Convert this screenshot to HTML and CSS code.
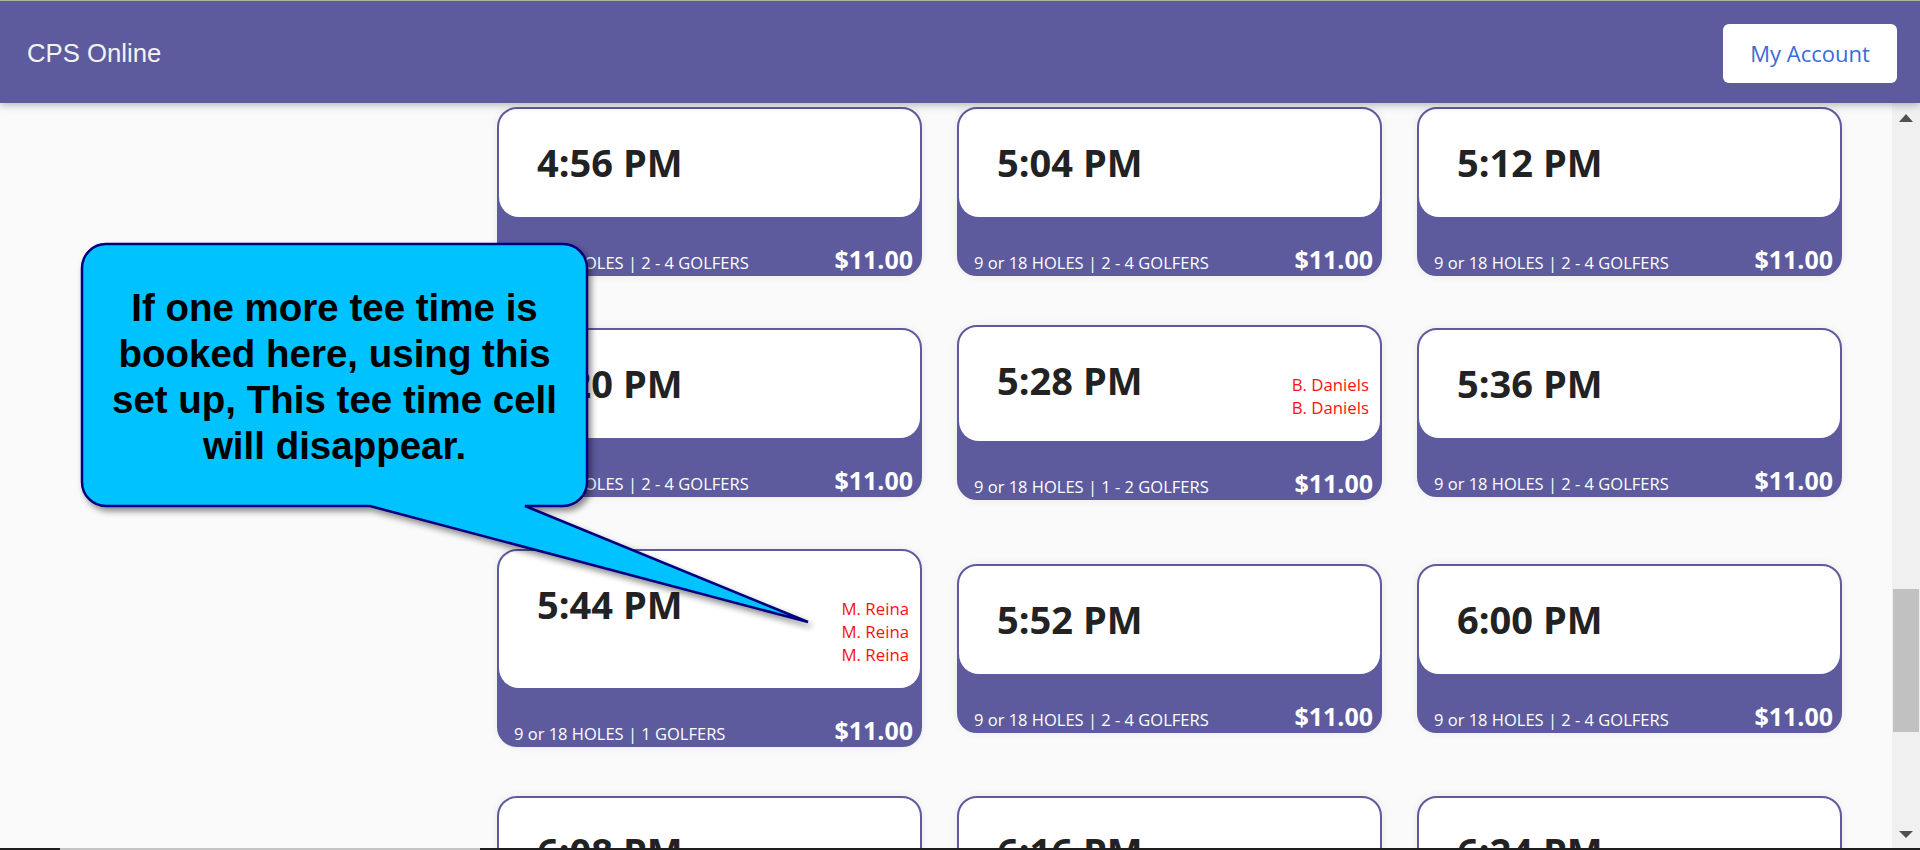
FILE: index.html
```html
<!DOCTYPE html>
<html lang="en">
<head>
<meta charset="utf-8">
<title>CPS Online</title>
<link rel="stylesheet" href="styles.css">
</head>
<body>
<div class="app">
  <header class="topbar">
    <div class="brand">CPS Online</div>
    <button class="account-btn">My Account</button>
  </header>
  <div class="viewport">
    <main class="content">
      <div class="tee-grid">
        <div class="tee-card">
          <div class="tee-top"><div class="tee-time">4:56 PM</div></div>
          <div class="tee-foot"><div class="tee-foot-row"><span class="tee-info">9 or 18 HOLES | 2 - 4 GOLFERS</span><span class="tee-price">$11.00</span></div></div>
        </div>
        <div class="tee-card">
          <div class="tee-top"><div class="tee-time">5:04 PM</div></div>
          <div class="tee-foot"><div class="tee-foot-row"><span class="tee-info">9 or 18 HOLES | 2 - 4 GOLFERS</span><span class="tee-price">$11.00</span></div></div>
        </div>
        <div class="tee-card">
          <div class="tee-top"><div class="tee-time">5:12 PM</div></div>
          <div class="tee-foot"><div class="tee-foot-row"><span class="tee-info">9 or 18 HOLES | 2 - 4 GOLFERS</span><span class="tee-price">$11.00</span></div></div>
        </div>

        <div class="tee-card">
          <div class="tee-top"><div class="tee-time">5:20 PM</div></div>
          <div class="tee-foot"><div class="tee-foot-row"><span class="tee-info">9 or 18 HOLES | 2 - 4 GOLFERS</span><span class="tee-price">$11.00</span></div></div>
        </div>
        <div class="tee-card">
          <div class="tee-top"><div class="tee-time">5:28 PM</div><div class="tee-names"><div>B. Daniels</div><div>B. Daniels</div></div></div>
          <div class="tee-foot"><div class="tee-foot-row"><span class="tee-info">9 or 18 HOLES | 1 - 2 GOLFERS</span><span class="tee-price">$11.00</span></div></div>
        </div>
        <div class="tee-card">
          <div class="tee-top"><div class="tee-time">5:36 PM</div></div>
          <div class="tee-foot"><div class="tee-foot-row"><span class="tee-info">9 or 18 HOLES | 2 - 4 GOLFERS</span><span class="tee-price">$11.00</span></div></div>
        </div>

        <div class="tee-card">
          <div class="tee-top"><div class="tee-time">5:44 PM</div><div class="tee-names"><div>M. Reina</div><div>M. Reina</div><div>M. Reina</div></div></div>
          <div class="tee-foot"><div class="tee-foot-row"><span class="tee-info">9 or 18 HOLES | 1 GOLFERS</span><span class="tee-price">$11.00</span></div></div>
        </div>
        <div class="tee-card">
          <div class="tee-top"><div class="tee-time">5:52 PM</div></div>
          <div class="tee-foot"><div class="tee-foot-row"><span class="tee-info">9 or 18 HOLES | 2 - 4 GOLFERS</span><span class="tee-price">$11.00</span></div></div>
        </div>
        <div class="tee-card">
          <div class="tee-top"><div class="tee-time">6:00 PM</div></div>
          <div class="tee-foot"><div class="tee-foot-row"><span class="tee-info">9 or 18 HOLES | 2 - 4 GOLFERS</span><span class="tee-price">$11.00</span></div></div>
        </div>

        <div class="tee-card">
          <div class="tee-top"><div class="tee-time">6:08 PM</div></div>
          <div class="tee-foot"><div class="tee-foot-row"><span class="tee-info">9 or 18 HOLES | 2 - 4 GOLFERS</span><span class="tee-price">$11.00</span></div></div>
        </div>
        <div class="tee-card">
          <div class="tee-top"><div class="tee-time">6:16 PM</div></div>
          <div class="tee-foot"><div class="tee-foot-row"><span class="tee-info">9 or 18 HOLES | 2 - 4 GOLFERS</span><span class="tee-price">$11.00</span></div></div>
        </div>
        <div class="tee-card">
          <div class="tee-top"><div class="tee-time">6:24 PM</div></div>
          <div class="tee-foot"><div class="tee-foot-row"><span class="tee-info">9 or 18 HOLES | 2 - 4 GOLFERS</span><span class="tee-price">$11.00</span></div></div>
        </div>
      </div>

      <div class="callout">
        <svg class="callout-shape" width="740" height="390" viewBox="0 0 740 390">
          <path d="M 25 1 H 482 A 24 24 0 0 1 506 25 V 239 A 24 24 0 0 1 482 263 H 444 L 727 379 L 289 263 H 25 A 24 24 0 0 1 1 239 V 25 A 24 24 0 0 1 25 1 Z" fill="#00c2ff" stroke="#000080" stroke-width="2.5" stroke-linejoin="miter"/>
        </svg>
        <div class="callout-text">If one more tee time is<br>booked here, using this<br>set up, This tee time cell<br>will disappear.</div>
      </div>
    </main>
    <div class="scrollbar">
      <div class="sb-btn"><span class="sb-up"></span></div>
      <div class="sb-track"><div class="sb-thumb"></div></div>
      <div class="sb-btn"><span class="sb-down"></span></div>
    </div>
  </div>
  <div class="hbar"></div>
</div>
</body>
</html>
```

FILE: styles.css
```css
* { box-sizing: border-box; }

html, body {
  margin: 0;
  padding: 0;
  width: 1920px;
  height: 850px;
  overflow: hidden;
  background: #fafafa;
  font-family: "Open Sans", "Liberation Sans", sans-serif;
}

.app {
  display: flex;
  flex-direction: column;
  height: 850px;
}

.topbar {
  position: relative;
  z-index: 3;
  height: 103px;
  flex: 0 0 103px;
  border-top: 1px solid #a2b79b;
  background: #5d5b9d;
  display: flex;
  align-items: center;
  justify-content: space-between;
  padding: 0 23px 0 27px;
  box-shadow: 0 2px 8px rgba(0, 0, 0, 0.28);
}

.brand {
  font-family: "Liberation Sans", Arial, sans-serif;
  font-size: 25.7px;
  color: #f3f3f3;
  padding-top: 2px;
}

.account-btn {
  width: 174px;
  height: 59px;
  border: none;
  border-radius: 6px;
  background: #ffffff;
  color: #3a6bd6;
  font-family: "Open Sans", sans-serif;
  font-size: 22px;
  padding: 0;
  margin-top: 2px;
}

.viewport {
  flex: 1 1 auto;
  display: flex;
  min-height: 0;
}

.content {
  position: relative;
  flex: 1 1 auto;
  overflow: hidden;
  padding: 4px 0 0 497px;
}

.tee-grid {
  display: grid;
  grid-template-columns: repeat(3, 425px);
  column-gap: 35px;
  row-gap: 49px;
  align-items: center;
}

.tee-card {
  border: 2px solid #5d5b9d;
  border-radius: 20px;
  background: #5d5b9d;
  overflow: hidden;
  box-shadow: 0 0 8px rgba(0, 0, 0, 0.07);
}

.tee-top {
  background: #ffffff;
  border-radius: 0 0 20px 20px;
  min-height: 108px;
  padding: 35px 11px 22px 38px;
  display: flex;
  justify-content: space-between;
  align-items: flex-start;
}

.tee-time {
  font-size: 38px;
  line-height: 37px;
  font-weight: 700;
  color: #222222;
  white-space: nowrap;
}

.tee-names {
  margin-top: 11px;
  font-size: 16.8px;
  line-height: 23px;
  color: #ff1010;
  text-align: right;
}

.tee-foot {
  height: 57px;
  display: flex;
  align-items: flex-end;
}

.tee-foot-row {
  flex: 1;
  display: flex;
  justify-content: space-between;
  align-items: baseline;
  padding: 0 7px 2px 15px;
  color: #ffffff;
}

.tee-info {
  font-size: 16.5px;
  line-height: 16px;
  white-space: nowrap;
}

.tee-price {
  font-size: 25px;
  line-height: 25px;
  font-weight: 700;
}

.callout {
  position: absolute;
  z-index: 2;
  left: 81px;
  top: 140px;
  width: 507px;
  height: 264px;
}

.callout-shape {
  position: absolute;
  left: 0;
  top: 0;
  overflow: visible;
  filter: drop-shadow(3px 4px 3px rgba(0, 0, 0, 0.45));
}

.callout-text {
  position: relative;
  height: 264px;
  display: flex;
  align-items: center;
  justify-content: center;
  text-align: center;
  white-space: nowrap;
  font-family: "Liberation Sans", Arial, sans-serif;
  font-weight: 700;
  font-size: 38.5px;
  line-height: 46px;
  color: #000000;
  padding-top: 4px;
}

.scrollbar {
  flex: 0 0 28px;
  width: 28px;
  background: #f0f0f0;
  display: flex;
  flex-direction: column;
}

.sb-btn {
  height: 29px;
  flex: 0 0 29px;
  display: flex;
  align-items: center;
  justify-content: center;
}

.sb-btn:last-child {
  flex-basis: 28px;
  height: 28px;
}

.sb-up {
  width: 0;
  height: 0;
  border-left: 7px solid transparent;
  border-right: 7px solid transparent;
  border-bottom: 8px solid #505050;
  margin-top: 1px;
}

.sb-down {
  width: 0;
  height: 0;
  border-left: 7px solid transparent;
  border-right: 7px solid transparent;
  border-top: 7px solid #505050;
}

.sb-track {
  flex: 1 1 auto;
  padding: 0 1px 0 1px;
}

.sb-thumb {
  margin-top: 457px;
  height: 143px;
  background: #c1c1c1;
}

.hbar {
  flex: 0 0 2px;
  height: 2px;
  background: linear-gradient(to right, #1e1e1e 0, #1e1e1e 60px, #c4c4c4 60px, #c4c4c4 480px, #1e1e1e 480px);
}
```
